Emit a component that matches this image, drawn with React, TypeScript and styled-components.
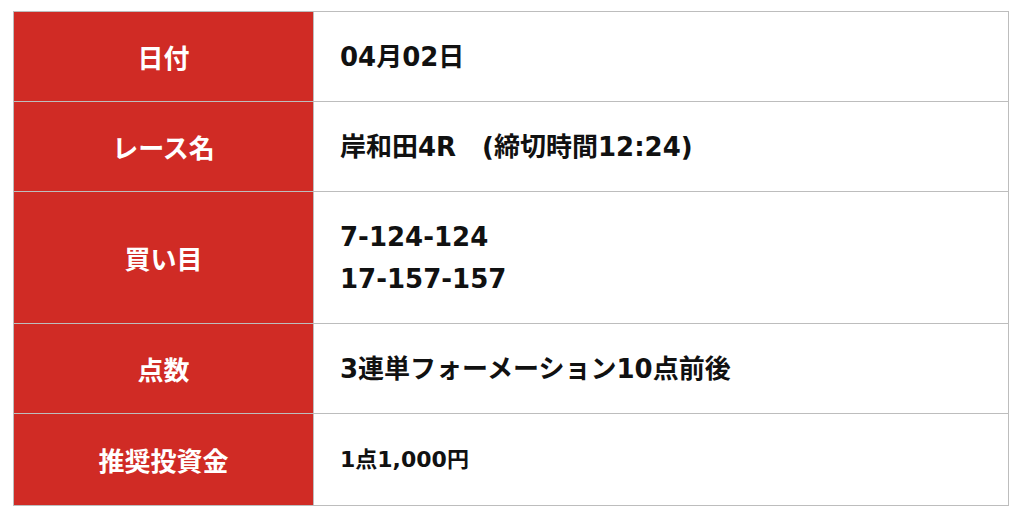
import React from "react";
import styled, { createGlobalStyle } from "styled-components";

const GlobalStyle = createGlobalStyle`
  html, body { margin: 0; padding: 0; background: #ffffff; }
  body { font-family: "DejaVu Sans", "Noto Sans CJK JP", sans-serif; }
`;

const Page = styled.div`
  padding: 11px 15px 0 13px;
`;

const Table = styled.table`
  width: 996px;
  border-collapse: collapse;
  border: 1px solid #bdbdbd;
  table-layout: fixed;
`;

const Row = styled.tr``;

const Head = styled.th<{ $tall?: boolean }>`
  box-sizing: border-box;
  width: 300px;
  background: #d02b25;
  color: #ffffff;
  font-family: "Noto Sans CJK JP", sans-serif;
  font-size: 26px;
  font-weight: 700;
  line-height: 42px;
  padding: ${(p) => (p.$tall ? "25px 10px 24px" : "24px 10px 23px")};
  text-align: center;
  vertical-align: middle;
  border: 1px solid #bdbdbd;
`;

const Cell = styled.td<{ $small?: boolean }>`
  background: #ffffff;
  color: #111111;
  font-family: "DejaVu Sans", "Noto Sans CJK JP", sans-serif;
  font-size: ${(p) => (p.$small ? "22px" : "26px")};
  font-weight: 700;
  line-height: 42px;
  padding: 24px 26px 23px;
  text-align: left;
  vertical-align: middle;
  border: 1px solid #bdbdbd;
`;

const rows: { label: string; value: React.ReactNode; small?: boolean; tall?: boolean }[] = [
  { label: "日付", value: "04月02日" },
  { label: "レース名", value: "岸和田4R\u3000(締切時間12:24)" },
  {
    label: "買い目",
    tall: true,
    value: (
      <>
        7-124-124
        <br />
        17-157-157
      </>
    ),
  },
  { label: "点数", value: "3連単フォーメーション10点前後" },
  { label: "推奨投資金", value: "1点1,000円", small: true, tall: true },
];

export default function App() {
  return (
    <>
      <GlobalStyle />
      <Page>
        <Table>
          <tbody>
            {rows.map((r) => (
              <Row key={r.label}>
                <Head $tall={r.tall}>{r.label}</Head>
                <Cell $small={r.small}>{r.value}</Cell>
              </Row>
            ))}
          </tbody>
        </Table>
      </Page>
    </>
  );
}
